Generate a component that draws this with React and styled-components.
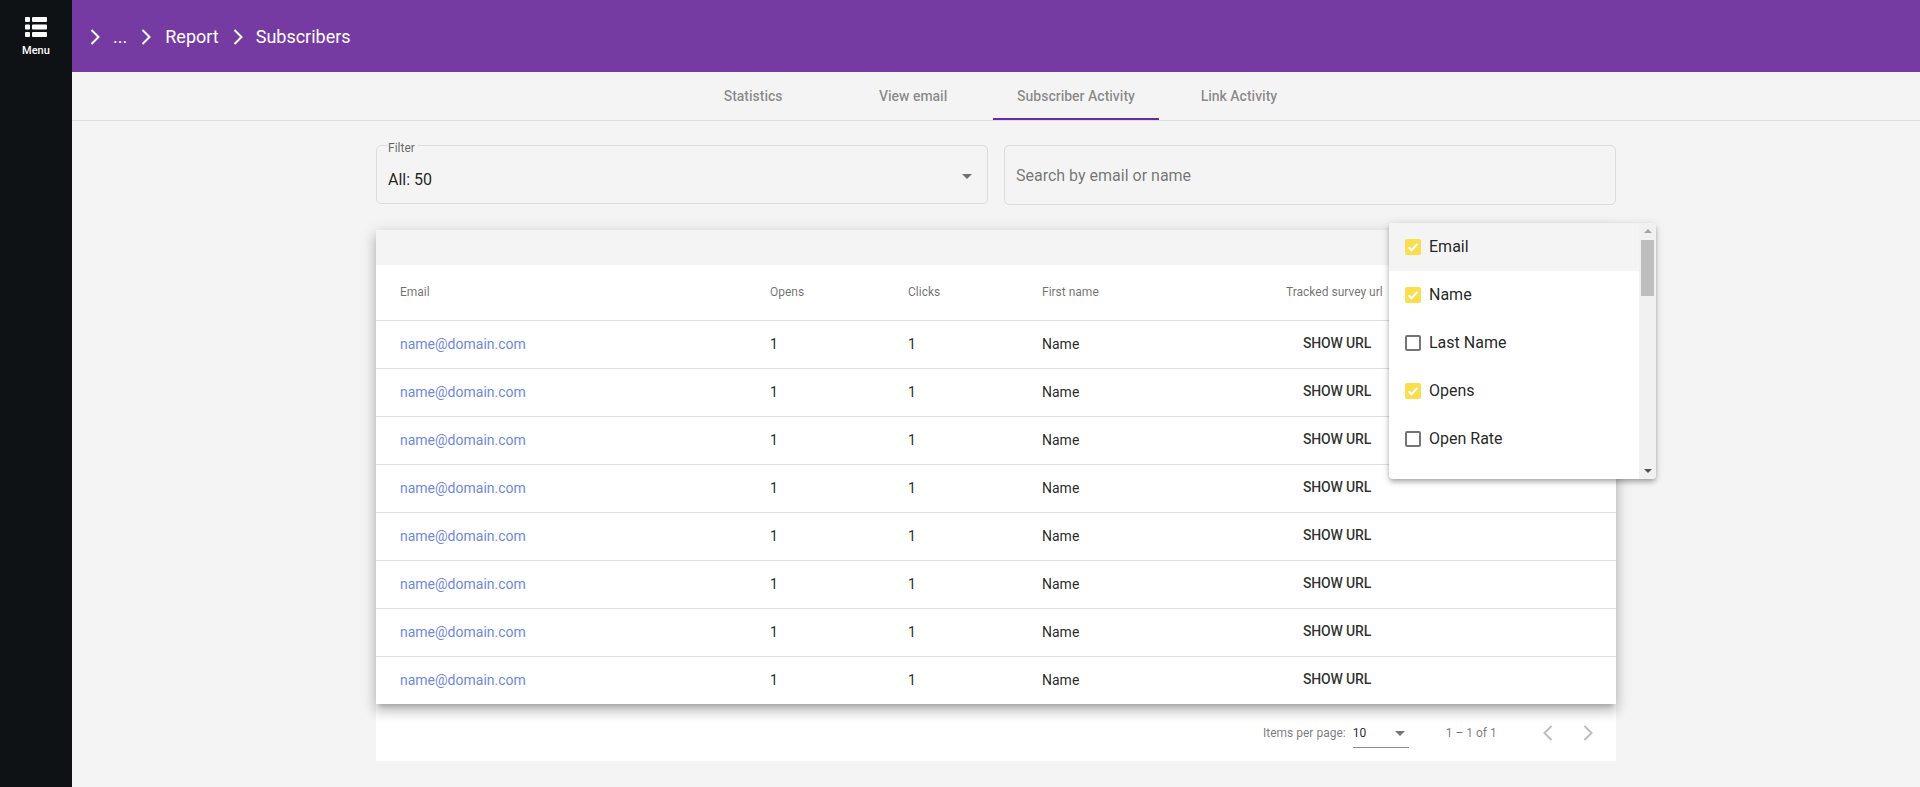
import React from "react";
import styled, { createGlobalStyle } from "styled-components";

const Global = createGlobalStyle`
  html, body { margin: 0; padding: 0; background: #f4f4f4; font-family: Roboto, "Liberation Sans", sans-serif; }
  * { box-sizing: border-box; }
`;

const Shell = styled.div`
  display: flex;
  width: 1920px;
  height: 787px;
  overflow: hidden;
`;
const Sidebar = styled.aside`
  width: 72px;
  flex: none;
  background: #0f1215;
  display: flex;
  flex-direction: column;
  align-items: center;
  padding-top: 14px;
`;
const MenuLabel = styled.span`
  color: #fff;
  font-size: 11px;
  font-weight: 500;
  line-height: 14px;
  margin-top: 4px;
`;
const Main = styled.main`
  flex: 1;
  min-width: 0;
  display: flex;
  flex-direction: column;
`;
const Header = styled.header`
  height: 72px;
  flex: none;
  background: #763ba3;
  display: flex;
  align-items: center;
  padding-left: 11px;
  color: #fff;
  font-size: 18px;
`;
const Crumb = styled.span`
  margin-left: ${p => p.$gap}px;
  line-height: 24px;
  margin-top: 2px;
`;
const Chevron = styled.svg`
  width: 24px;
  height: 24px;
  margin-left: ${p => p.$gap || 0}px;
  margin-top: 2px;
  fill: none;
  stroke: #fff;
  stroke-width: 2;
`;
const TabBar = styled.nav`
  height: 49px;
  flex: none;
  display: flex;
  justify-content: center;
  border-bottom: 1px solid #dcdcdc;
`;
const Tab = styled.div`
  min-width: 160px;
  padding: 2px 24px 0;
  height: 48px;
  display: flex;
  align-items: center;
  justify-content: center;
  font-size: 14px;
  font-weight: 500;
  color: rgba(0, 0, 0, 0.46);
  border-bottom: 2px solid ${p => (p.$active ? "#6f27a8" : "transparent")};
`;
const Content = styled.div`
  width: 1240px;
  margin-left: 304px;
  position: relative;
`;
const Filters = styled.div`
  display: grid;
  grid-template-columns: 612px 612px;
  gap: 16px;
  padding-top: 24px;
  height: 109px;
`;
const FilterField = styled.fieldset`
  margin: 0;
  height: 65px;
  margin-top: -6px;
  padding: 0 11px;
  border: 1px solid #dcdcdc;
  border-radius: 5px;
  position: relative;
`;
const FilterLegend = styled.legend`
  font-size: 12px;
  line-height: 12px;
  padding: 0 3px 0 0;
  color: rgba(0, 0, 0, 0.6);
  transform: translateY(3px);
`;
const FilterValue = styled.div`
  font-size: 16px;
  line-height: 20px;
  margin-top: 19px;
  color: rgba(0, 0, 0, 0.87);
`;
const CaretBox = styled.span`
  position: absolute;
  right: 15px;
  top: 23px;
  width: 0;
  height: 0;
  border-left: 5px solid transparent;
  border-right: 5px solid transparent;
  border-top: 5px solid rgba(0, 0, 0, 0.54);
`;
const SearchField = styled.div`
  height: 60px;
  padding: 0 11px;
  border: 1px solid #dcdcdc;
  border-radius: 5px;
  display: flex;
  align-items: center;
  font-size: 16px;
  color: rgba(0, 0, 0, 0.54);
`;
const Card = styled.section`
  position: relative;
  z-index: 1;
  background: #fff;
  box-shadow: 0 5px 5px -3px rgba(0,0,0,.2), 0 8px 10px 1px rgba(0,0,0,.14), 0 3px 14px 2px rgba(0,0,0,.12);
`;
const CardTop = styled.div`
  height: 35px;
  background: #f4f4f4;
`;
const cols = "394px 138px 134px 244px 1fr";
const HeadRow = styled.div`
  display: grid;
  grid-template-columns: ${cols};
  height: 55px;
  padding-bottom: 2px;
  align-items: center;
  font-size: 12px;
  font-weight: 400;
  color: rgba(0, 0, 0, 0.58);
`;
const Row = styled.div`
  display: grid;
  grid-template-columns: ${cols};
  height: 48px;
  padding-bottom: 2px;
  align-items: center;
  font-size: 14px;
  color: rgba(0, 0, 0, 0.87);
  border-top: 1px solid #dedede;
`;
const FirstCell = styled.div`
  padding-left: 24px;
`;
const EmailLink = styled.a`
  color: #7188e0;
`;
const ShowUrl = styled.div`
  padding: 0 0 2px 17px;
  font-weight: 500;
  letter-spacing: -0.15px;
  color: rgba(0, 0, 0, 0.82);
`;
const Paginator = styled.div`
  height: 57px;
  background: #fff;
  display: flex;
  align-items: center;
  font-size: 12px;
  color: rgba(0, 0, 0, 0.54);
  padding-left: 887px;
`;
const PageSelect = styled.div`
  width: 56px;
  height: 28px;
  margin-left: 7px;
  margin-top: 3px;
  border-bottom: 1px solid #8f8f8f;
  display: flex;
  align-items: center;
  justify-content: space-between;
  padding: 0 4px 2px 0;
  color: rgba(0, 0, 0, 0.87);
`;
const PageCaret = styled.span`
  width: 0;
  height: 0;
  border-left: 5px solid transparent;
  border-right: 5px solid transparent;
  border-top: 5px solid rgba(0, 0, 0, 0.54);
  margin-top: 2px;
`;
const Range = styled.span`
  margin-left: 37px;
`;
const PageButton = styled.svg`
  width: 24px;
  height: 24px;
  margin-left: ${p => p.$gap}px;
  fill: none;
  stroke: rgba(0, 0, 0, 0.26);
  stroke-width: 2;
`;
const Menu = styled.div`
  position: absolute;
  z-index: 5;
  left: 1013px;
  top: 102px;
  width: 267px;
  height: 256px;
  display: flex;
  background: #fff;
  border-radius: 4px;
  overflow: hidden;
  box-shadow: 0 2px 4px -1px rgba(0,0,0,.2), 0 4px 5px 0 rgba(0,0,0,.14), 0 1px 10px 0 rgba(0,0,0,.12);
`;
const MenuList = styled.div`
  flex: 1;
`;
const MenuItem = styled.div`
  height: 48px;
  display: flex;
  align-items: center;
  padding-left: 16px;
  gap: 8px;
  font-size: 16px;
  color: rgba(0, 0, 0, 0.87);
  background: ${p => (p.$hover ? "#f4f4f4" : "transparent")};
`;
const ItemLabel = styled.span`
  margin-top: -2px;
`;
const Check = styled.span`
  width: 16px;
  height: 16px;
  border-radius: 2px;
  flex: none;
  display: flex;
  background: ${p => (p.$on ? "#fbdd4e" : "transparent")};
  border: ${p => (p.$on ? "0" : "2px solid #757575")};
`;
const Track = styled.div`
  width: 17px;
  flex: none;
  background: #f1f1f1;
  display: flex;
  flex-direction: column;
  align-items: center;
`;
const ArrowUp = styled.span`
  margin-top: 6px;
  width: 0;
  height: 0;
  border-left: 4px solid transparent;
  border-right: 4px solid transparent;
  border-bottom: 4px solid #a3a3a3;
`;
const Thumb = styled.span`
  width: 13px;
  height: 56px;
  margin-top: 7px;
  background: #bebebe;
`;
const ArrowDown = styled.span`
  margin-top: auto;
  margin-bottom: 6px;
  width: 0;
  height: 0;
  border-left: 4px solid transparent;
  border-right: 4px solid transparent;
  border-top: 4px solid #505050;
`;

const ChevronRight = ({ gap }) => (
  <Chevron $gap={gap} viewBox="0 0 24 24"><path d="M8.5 5l7 7-7 7" /></Chevron>
);

const tabs = ["Statistics", "View email", "Subscriber Activity", "Link Activity"];
const items = [["Email", true, true], ["Name", true], ["Last Name", false], ["Opens", true], ["Open Rate", false]];

export default function App() {
  return (
    <Shell>
      <Global />
      <Sidebar>
        <svg width="26" height="26" viewBox="0 0 26 26" fill="#fff">
          <rect x="2" y="3" width="5" height="5" rx="1" />
          <rect x="2" y="10.5" width="5" height="5" rx="1" />
          <rect x="2" y="18" width="5" height="5" rx="1" />
          <rect x="9" y="3" width="15" height="5" rx="1" />
          <rect x="9" y="10.5" width="15" height="5" rx="1" />
          <rect x="9" y="18" width="15" height="5" rx="1" />
        </svg>
        <MenuLabel>Menu</MenuLabel>
      </Sidebar>
      <Main>
        <Header>
          <ChevronRight />
          <Crumb $gap={6}>...</Crumb>
          <ChevronRight gap={7} />
          <Crumb $gap={7}>Report</Crumb>
          <ChevronRight gap={7} />
          <Crumb $gap={6}>Subscribers</Crumb>
        </Header>
        <TabBar>
          {tabs.map((t, i) => <Tab key={t} $active={i === 2}>{t}</Tab>)}
        </TabBar>
        <Content>
          <Filters>
            <FilterField>
              <FilterLegend>Filter</FilterLegend>
              <FilterValue>All: 50</FilterValue>
              <CaretBox />
            </FilterField>
            <SearchField>Search by email or name</SearchField>
          </Filters>
          <Card>
            <CardTop />
            <HeadRow>
              <FirstCell>Email</FirstCell>
              <div>Opens</div>
              <div>Clicks</div>
              <div>First name</div>
              <div>Tracked survey url</div>
            </HeadRow>
            {Array.from({ length: 8 }).map((_, i) => (
              <Row key={i}>
                <FirstCell><EmailLink>name@domain.com</EmailLink></FirstCell>
                <div>1</div>
                <div>1</div>
                <div>Name</div>
                <ShowUrl>SHOW URL</ShowUrl>
              </Row>
            ))}
          </Card>
          <Paginator>
            <span>Items per page:</span>
            <PageSelect><span>10</span><PageCaret /></PageSelect>
            <Range>1 – 1 of 1</Range>
            <PageButton $gap={39} viewBox="0 0 24 24"><path d="M15.5 5l-7 7 7 7" /></PageButton>
            <PageButton $gap={16} viewBox="0 0 24 24"><path d="M8.5 5l7 7-7 7" /></PageButton>
          </Paginator>
          <Menu>
            <MenuList>
              {items.map(([label, on, hover]) => (
                <MenuItem key={label} $hover={hover}>
                  <Check $on={on}>
                    {on && (
                      <svg width="16" height="16" viewBox="0 0 16 16" fill="none" stroke="#fff" strokeWidth="2">
                        <path d="M3.5 8.2l3 3 6-6.4" />
                      </svg>
                    )}
                  </Check>
                  <ItemLabel>{label}</ItemLabel>
                </MenuItem>
              ))}
            </MenuList>
            <Track>
              <ArrowUp />
              <Thumb />
              <ArrowDown />
            </Track>
          </Menu>
        </Content>
      </Main>
    </Shell>
  );
}
